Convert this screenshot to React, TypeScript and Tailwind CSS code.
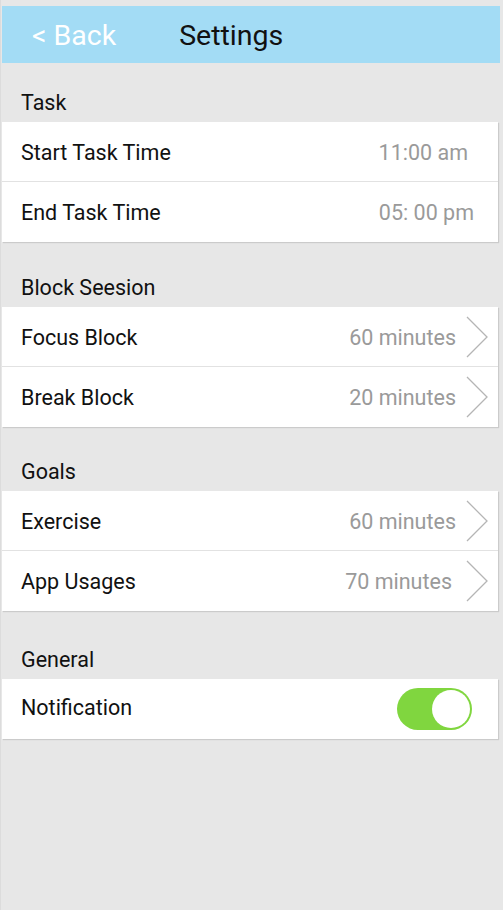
import React from 'react'

const font = { fontFamily: 'Roboto, "Noto Sans", sans-serif' }

function Chevron() {
  return (
    <svg width="24" height="42" viewBox="0 0 24 42" className="shrink-0">
      <polyline
        points="2,1 22,21 2,41"
        fill="none"
        stroke="#b5b5b5"
        strokeWidth="1.3"
      />
    </svg>
  )
}

function Toggle() {
  return (
    <div className="w-[75px] h-[42px] rounded-full bg-[#80d63f] flex items-center justify-end pr-[2px]">
      <div className="w-[38px] h-[38px] rounded-full bg-white" />
    </div>
  )
}

type Row = {
  label: string
  value?: string
  chevron?: boolean
  toggle?: boolean
  pr?: string
}

function Section({ title, rows, top }: { title: string; rows: Row[]; top: string }) {
  return (
    <div>
      <div className={`${top} pb-[4px] pl-[19px] text-[21.5px] leading-[30px] text-[#111]`}>
        {title}
      </div>
      <div className="bg-white mr-[5px] shadow-[1px_1px_1px_rgba(0,0,0,0.12)]">
        {rows.map((r, i) => (
          <div
            key={r.label}
            className={`h-[60px] flex items-center pl-[19px] ${
              r.toggle ? 'pb-[2px]' : 'pt-[3px]'
            } ${i < rows.length - 1 ? 'border-b border-[#e2e2e2]' : ''}`}
          >
            <span className="text-[21.5px] text-[#111]">{r.label}</span>
            <div className={`ml-auto flex items-center ${r.chevron ? '-mt-[3px]' : ''}`}>
              {r.value && (
                <span className={`text-[21.5px] text-[#9a9a9a] ${r.chevron ? 'mt-[3px]' : ''} ${r.pr ?? ''}`}>
                  {r.value}
                </span>
              )}
              {r.chevron && (
                <div className="mr-[9px]">
                  <Chevron />
                </div>
              )}
              {r.toggle && (
                <div className="mr-[26px] mt-[2px]">
                  <Toggle />
                </div>
              )}
            </div>
          </div>
        ))}
      </div>
    </div>
  )
}

export default function App() {
  return (
    <div
      style={font}
      className="w-[503px] h-[910px] bg-[#e7e7e7] pt-[6px] pl-[1px] border-l border-[#dcdcdc] overflow-hidden"
    >
      <header className="h-[57px] mr-[3px] bg-[#a3dcf5] flex items-center pt-[3px]">
        <span className="ml-[30px] text-[28.5px] text-white">&lt; Back</span>
        <span className="ml-[63px] text-[28.5px] text-[#111]">Settings</span>
      </header>

      <Section
        title="Task"
        top="pt-[25px]"
        rows={[
          { label: 'Start Task Time', value: '11:00 am', pr: 'mr-[30px]' },
          { label: 'End Task Time', value: '05: 00 pm', pr: 'mr-[24px]' },
        ]}
      />
      <Section
        title="Block Seesion"
        top="pt-[31px]"
        rows={[
          { label: 'Focus Block', value: '60 minutes', chevron: true, pr: 'mr-[9px]' },
          { label: 'Break Block', value: '20 minutes', chevron: true, pr: 'mr-[9px]' },
        ]}
      />
      <Section
        title="Goals"
        top="pt-[30px]"
        rows={[
          { label: 'Exercise', value: '60 minutes', chevron: true, pr: 'mr-[9px]' },
          { label: 'App Usages', value: '70 minutes', chevron: true, pr: 'mr-[13px]' },
        ]}
      />
      <Section
        title="General"
        top="pt-[34px]"
        rows={[{ label: 'Notification', toggle: true }]}
      />
    </div>
  )
}
